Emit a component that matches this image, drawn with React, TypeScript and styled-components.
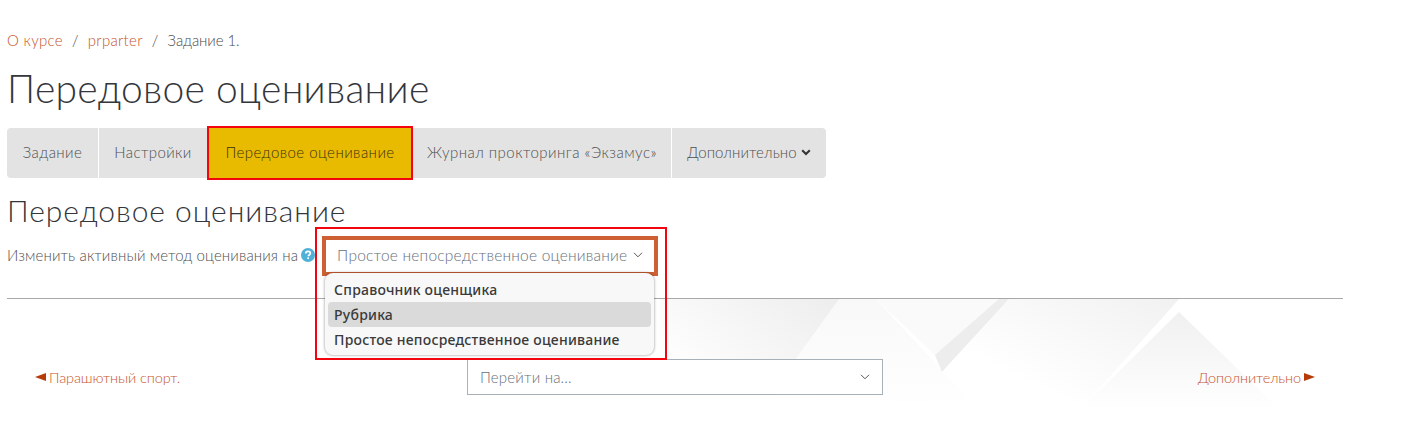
import React from 'react';
import styled, { createGlobalStyle } from 'styled-components';

const GlobalStyle = createGlobalStyle`
  html, body {
    margin: 0;
    padding: 0;
    background: #fff;
    font-family: 'Lato', 'Open Sans', sans-serif;
    font-weight: 300;
    color: #3a3a3a;
  }
`;

const Page = styled.div`
  position: relative;
  width: 1425px;
  height: 425px;
  overflow: hidden;
  box-sizing: border-box;
  padding: 31px 82px 0 7px;
`;

const Decor = styled.svg`
  position: absolute;
  left: 0;
  top: 0;
  pointer-events: none;
`;

const Content = styled.div`
  position: relative;
`;

const Breadcrumb = styled.nav`
  display: flex;
  align-items: center;
  gap: 9px;
  height: 18px;
  font-size: 15px;
  letter-spacing: 0.3px;
  color: #4a4a4a;
`;

const Crumb = styled.a`
  color: #c7532a;
`;

const CurrentCrumb = styled.span`
  letter-spacing: -0.1px;
`;

const Title = styled.h1`
  margin: 9px 0 0;
  height: 60px;
  font-size: 39px;
  line-height: 60px;
  font-weight: 300;
  letter-spacing: 0.3px;
  color: #33363b;
`;

const Tabs = styled.div`
  display: flex;
  width: fit-content;
  height: 50px;
  margin-top: 10px;
  gap: 1px;
`;

const Tab = styled.div<{ $active?: boolean; $w: number; $spacing?: number }>`
  display: flex;
  align-items: center;
  justify-content: center;
  gap: 4px;
  box-sizing: border-box;
  width: ${p => p.$w}px;
  padding-bottom: 2px;
  font-size: 15px;
  letter-spacing: ${p => p.$spacing ?? 0.4}px;
  color: ${p => (p.$active ? '#3d3210' : '#4f4f4f')};
  background: ${p => (p.$active ? '#e8bb00' : '#e3e3e3')};
  ${p => p.$active && 'box-shadow: 0 0 0 2px #f2050f inset; margin: -2px -1px; position: relative;'}
  &:first-child {
    border-radius: 4px 0 0 4px;
  }
  &:last-child {
    border-radius: 0 4px 4px 0;
  }
`;

const Heading = styled.h2`
  margin: 16px 0 0;
  height: 34px;
  line-height: 32px;
  font-size: 30px;
  font-weight: 300;
  letter-spacing: 0.95px;
  color: #33363b;
`;

const FormRow = styled.div`
  display: flex;
  align-items: center;
  height: 40px;
  margin-top: 8px;
  font-size: 15px;
  letter-spacing: 0.12px;
  color: #4f4f4f;
`;

const FieldLabel = styled.span`
  margin-bottom: 3px;
`;

const Help = styled.svg`
  margin: 0 7px 2px 3px;
`;

const SelectWrap = styled.div`
  position: relative;
  width: 336px;
  height: 40px;
`;

const SelectBox = styled.div`
  display: flex;
  align-items: center;
  justify-content: space-between;
  box-sizing: border-box;
  height: 100%;
  padding: 0 11px 3px;
  background: #fff;
  border: 4px solid #cd6133;
  font-size: 15.5px;
  letter-spacing: 0.2px;
  color: #66707a;
`;

const Highlight = styled.div`
  position: absolute;
  left: -7px;
  top: -9px;
  width: 352px;
  height: 133px;
  box-sizing: border-box;
  border: 2px solid #f2050f;
  pointer-events: none;
`;

const Menu = styled.div`
  position: absolute;
  left: 3px;
  top: 37px;
  width: 329px;
  height: 82px;
  box-sizing: border-box;
  padding: 4px 3px;
  background: #f8f8f8;
  border-radius: 8px;
  box-shadow: 0 0 3px rgba(0, 0, 0, 0.45);
  font-family: 'Noto Sans', sans-serif;
  font-size: 14px;
  font-weight: 500;
  letter-spacing: 0.22px;
  color: #3a3a3a;
`;

const MenuItem = styled.div<{ $selected?: boolean }>`
  display: flex;
  align-items: center;
  height: 25px;
  padding-left: 6px;
  border-radius: 4px;
  background: ${p => (p.$selected ? '#dadada' : 'transparent')};
`;

const Rule = styled.hr`
  margin: 22px 0 0;
  border: 0;
  border-top: 1px solid #a8a8a8;
`;

const NavRow = styled.div`
  display: grid;
  grid-template-columns: 460px 416px 1fr;
  height: 36px;
  align-items: center;
  margin-top: 60px;
  font-size: 14.5px;
  letter-spacing: -0.1px;
`;

const NavLink = styled.a<{ $right?: boolean }>`
  display: flex;
  align-items: center;
  gap: 3px;
  color: #c7532a;
  ${p => (p.$right ? 'justify-self: end; margin-right: 28px;' : 'margin-left: 28px;')}
`;

const Arrow = styled.svg`
  flex: none;
`;

const JumpSelect = styled.div`
  display: flex;
  align-items: center;
  justify-content: space-between;
  box-sizing: border-box;
  height: 36px;
  padding: 0 12px;
  background: #fff;
  border: 1px solid #a9b1b8;
  font-size: 15px;
  letter-spacing: 0.2px;
  color: #66707a;
`;

const Chevron = () => (
  <svg width="10" height="6" viewBox="0 0 10 6" fill="none" stroke="#555" strokeWidth="1">
    <path d="M1 .8l4 4 4-4" />
  </svg>
);

const App: React.FC = () => (
  <>
    <GlobalStyle />
    <Page>
      <Decor width="1425" height="425" viewBox="0 0 1425 425">
        <defs>
          <linearGradient id="fadeGrey" x1="0" y1="0" x2="0" y2="1">
            <stop offset="0" stopColor="#f0f0f0" />
            <stop offset="1" stopColor="#ffffff" />
          </linearGradient>
          <linearGradient id="fadeSoft" x1="1" y1="0" x2="0" y2="1">
            <stop offset="0" stopColor="#f1f1f1" />
            <stop offset="0.7" stopColor="#ffffff" />
          </linearGradient>
          <linearGradient id="fadeLeft" x1="1" y1="0" x2="0" y2="0.7">
            <stop offset="0" stopColor="#ededed" />
            <stop offset="1" stopColor="#ffffff" />
          </linearGradient>
          <linearGradient id="fadeMid" x1="0" y1="0" x2="0" y2="1">
            <stop offset="0" stopColor="#f8f8f8" />
            <stop offset="1" stopColor="#ffffff" />
          </linearGradient>
        </defs>
        <polygon points="660,298 840,298 770,395 660,395" fill="url(#fadeLeft)" />
        <polygon points="840,298 875,298 977,408 770,395" fill="url(#fadeMid)" />
        <polygon points="875,298 1000,298 935,355" fill="#fafafa" />
        <polygon points="1000,298 1010,298 942,372 935,355" fill="#ededed" />
        <polygon points="1010,298 1180,298 1080,410 942,372" fill="url(#fadeSoft)" />
        <polygon points="1179,312 1280,410 1080,410" fill="url(#fadeGrey)" />
      </Decor>
      <Content>
        <Breadcrumb>
          <Crumb>О курсе</Crumb>
          <span>/</span>
          <Crumb>prparter</Crumb>
          <span>/</span>
          <CurrentCrumb>Задание 1.</CurrentCrumb>
        </Breadcrumb>
        <Title>Передовое оценивание</Title>
        <Tabs>
          <Tab $w={91}>Задание</Tab>
          <Tab $w={108}>Настройки</Tab>
          <Tab $w={206} $active $spacing={0.45}>Передовое оценивание</Tab>
          <Tab $w={258} $spacing={0.48}>Журнал прокторинга «Экзамус»</Tab>
          <Tab $w={154} $spacing={0.1}>
            Дополнительно
            <svg width="10" height="7" viewBox="0 0 10 7" fill="none" stroke="#333" strokeWidth="2">
              <path d="M1.2 1.2L5 5l3.8-3.8" />
            </svg>
          </Tab>
        </Tabs>
        <Heading>Передовое оценивание</Heading>
        <FormRow>
          <FieldLabel>Изменить активный метод оценивания на</FieldLabel>
          <Help width="14" height="14" viewBox="0 0 14 14">
            <circle cx="7" cy="7" r="7" fill="#4fb0d8" />
            <path d="M4.8 5.4c0-1.3 1-2 2.3-2s2.2.8 2.2 1.9c0 1.7-2 1.6-2 3" fill="none" stroke="#fff" strokeWidth="1.7" />
            <rect x="6.3" y="9.3" width="1.7" height="1.7" fill="#fff" />
          </Help>
          <SelectWrap>
            <SelectBox>
              Простое непосредственное оценивание
              <Chevron />
            </SelectBox>
            <Menu>
              <MenuItem>Справочник оценщика</MenuItem>
              <MenuItem $selected>Рубрика</MenuItem>
              <MenuItem>Простое непосредственное оценивание</MenuItem>
            </Menu>
            <Highlight />
          </SelectWrap>
        </FormRow>
        <Rule />
        <NavRow>
          <NavLink>
            <Arrow width="11" height="8" viewBox="0 0 11 8"><path d="M11 0v8L0 4z" fill="#b53c08" /></Arrow>
            Парашютный спорт.
          </NavLink>
          <JumpSelect>
            Перейти на...
            <Chevron />
          </JumpSelect>
          <NavLink $right>
            Дополнительно
            <Arrow width="11" height="8" viewBox="0 0 11 8"><path d="M0 0v8l11-4z" fill="#b53c08" /></Arrow>
          </NavLink>
        </NavRow>
      </Content>
    </Page>
  </>
);

export default App;
